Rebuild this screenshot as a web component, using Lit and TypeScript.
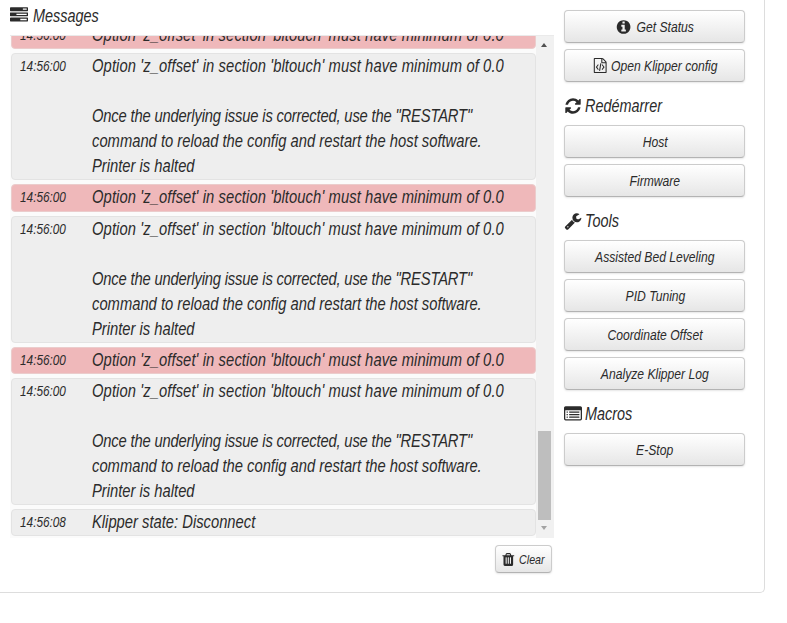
import { LitElement, html, css, svg } from "lit";
import { customElement } from "lit/decorators.js";

const ICONS: Record<string, string> = {
  tasks: "M1024 1408h640v-128h-640v128zm-384-512h1024v-128h-1024v128zm640-512h384v-128h-384v128zm512 832v256q0 26-19 45t-45 19h-1664q-26 0-45-19t-19-45v-256q0-26 19-45t45-19h1664q26 0 45 19t19 45zm0-512v256q0 26-19 45t-45 19h-1664q-26 0-45-19t-19-45v-256q0-26 19-45t45-19h1664q26 0 45 19t19 45zm0-512v256q0 26-19 45t-45 19h-1664q-26 0-45-19t-19-45v-256q0-26 19-45t45-19h1664q26 0 45 19t19 45z",
  info: "M1152 1376v-160q0-14-9-23t-23-9h-96v-512q0-14-9-23t-23-9h-320q-14 0-23 9t-9 23v160q0 14 9 23t23 9h96v320h-96q-14 0-23 9t-9 23v160q0 14 9 23t23 9h448q14 0 23-9t9-23zm-128-896v-160q0-14-9-23t-23-9h-192q-14 0-23 9t-9 23v160q0 14 9 23t23 9h192q14 0 23-9t9-23zm640 416q0 209-103 385.5t-279.5 279.5-385.5 103-385.5-103-279.5-279.5-103-385.5 103-385.5 279.5-279.5 385.5-103 385.5 103 279.5 279.5 103 385.5z",
  file: "M1596 380q28 28 48 76t20 88v1152q0 40-28 68t-68 28h-1344q-40 0-68-28t-28-68v-1600q0-40 28-68t68-28h896q40 0 88 20t76 48zm-444-244v376h376q-10-29-22-41l-313-313q-12-12-41-22zm384 1528v-1024h-416q-40 0-68-28t-28-68v-416h-768v1536h1280zm-928-896q8-11 21-12.5t24 6.5l51 38q11 8 12.5 21t-6.5 24l-182 243 182 243q8 11 6.5 24t-12.5 21l-51 38q-11 8-24 6.5t-21-12.5l-226-301q-14-19 0-38zm802 301q14 19 0 38l-226 301q-8 11-21 12.5t-24-6.5l-51-38q-11-8-12.5-21t6.5-24l182-243-182-243q-8-11-6.5-24t12.5-21l51-38q11-8 24-6.5t21 12.5zm-620 461q-13-2-20.5-13t-5.5-24l138-831q2-13 13-20.5t24-5.5l63 10q13 2 20.5 13t5.5 24l-138 831q-2 13-13 20.5t-24 5.5z",
  refresh: "M1639 1056q0 5-1 7-64 268-268 434.5t-478 166.5q-146 0-282.5-55t-243.5-157l-129 129q-19 19-45 19t-45-19-19-45v-448q0-26 19-45t45-19h448q26 0 45 19t19 45-19 45l-137 137q71 66 161 102t187 36q134 0 250-65t186-179q11-17 53-117 8-23 30-23h192q13 0 22.5 9.5t9.5 22.5zm25-800v448q0 26-19 45t-45 19h-448q-26 0-45-19t-19-45 19-45l138-138q-148-137-349-137-134 0-250 65t-186 179q-11 17-53 117-8 23-30 23h-199q-13 0-22.5-9.5t-9.5-22.5v-7q65-268 270-434.5t480-166.5q146 0 284 55.5t245 156.5l130-129q19-19 45-19t45 19 19 45z",
  wrench: "M448 1472q0-26-19-45t-45-19-45 19-19 45 19 45 45 19 45-19 19-45zm644-420l-682 682q-37 37-90 37-52 0-91-37l-106-108q-38-36-38-90 0-53 38-91l681-681q39 98 114.5 173.5t173.5 114.5zm634-435q0 39-23 106-47 134-164.5 217.5t-258.5 83.5q-185 0-316.5-131.5t-131.5-316.5 131.5-316.5 316.5-131.5q58 0 121.5 16.5t107.5 46.5q16 11 16 28t-16 28l-293 169v224l193 107q5-3 79-48.5t135.5-81 70.5-35.5q15 0 23.5 10t8.5 25z",
  list: "M384 1184v64q0 13-9.5 22.5t-22.5 9.5h-64q-13 0-22.5-9.5t-9.5-22.5v-64q0-13 9.5-22.5t22.5-9.5h64q13 0 22.5 9.5t9.5 22.5zm0-256v64q0 13-9.5 22.5t-22.5 9.5h-64q-13 0-22.5-9.5t-9.5-22.5v-64q0-13 9.5-22.5t22.5-9.5h64q13 0 22.5 9.5t9.5 22.5zm0-256v64q0 13-9.5 22.5t-22.5 9.5h-64q-13 0-22.5-9.5t-9.5-22.5v-64q0-13 9.5-22.5t22.5-9.5h64q13 0 22.5 9.5t9.5 22.5zm1152 512v64q0 13-9.5 22.5t-22.5 9.5h-960q-13 0-22.5-9.5t-9.5-22.5v-64q0-13 9.5-22.5t22.5-9.5h960q13 0 22.5 9.5t9.5 22.5zm0-256v64q0 13-9.5 22.5t-22.5 9.5h-960q-13 0-22.5-9.5t-9.5-22.5v-64q0-13 9.5-22.5t22.5-9.5h960q13 0 22.5 9.5t9.5 22.5zm0-256v64q0 13-9.5 22.5t-22.5 9.5h-960q-13 0-22.5-9.5t-9.5-22.5v-64q0-13 9.5-22.5t22.5-9.5h960q13 0 22.5 9.5t9.5 22.5zm128 704v-832q0-13-9.5-22.5t-22.5-9.5h-1472q-13 0-22.5 9.5t-9.5 22.5v832q0 13 9.5 22.5t22.5 9.5h1472q13 0 22.5-9.5t9.5-22.5zm128-1088v1088q0 66-47 113t-113 47h-1472q-66 0-113-47t-47-113v-1088q0-66 47-113t113-47h1472q66 0 113 47t47 113z",
  trash: "M704 1376v-704q0-14-9-23t-23-9h-64q-14 0-23 9t-9 23v704q0 14 9 23t23 9h64q14 0 23-9t9-23zm256 0v-704q0-14-9-23t-23-9h-64q-14 0-23 9t-9 23v704q0 14 9 23t23 9h64q14 0 23-9t9-23zm256 0v-704q0-14-9-23t-23-9h-64q-14 0-23 9t-9 23v704q0 14 9 23t23 9h64q14 0 23-9t9-23zm-544-992h448l-48-117q-7-9-17-11h-317q-10 2-17 11zm928 32v64q0 14-9 23t-23 9h-96v948q0 83-47 143.5t-113 60.5h-832q-66 0-113-58.5t-47-141.5v-952h-96q-14 0-23-9t-9-23v-64q0-14 9-23t23-9h309l70-167q15-37 54-63t79-26h320q40 0 79 26t54 63l70 167h309q14 0 23 9t9 23z",
};

const icon = (name: string) =>
  html`<svg class="ic ic-${name}" viewBox="0 0 1792 1792" preserveAspectRatio="none" aria-hidden="true">${svg`<path fill="currentColor" d=${ICONS[name]}></path>`}</svg>`;

const ERR = "Option 'z_offset' in section 'bltouch' must have minimum of 0.0";
const ONCE = 'Once the underlying issue is corrected, use the "RESTART"';
const LONG = [ERR, "", ONCE, "command to reload the config and restart the host software.", "Printer is halted"];

const ROWS: { t: string; lines: string[]; red?: boolean }[] = [
  { t: "14:56:00", lines: [ERR], red: true },
  { t: "14:56:00", lines: LONG },
  { t: "14:56:00", lines: [ERR], red: true },
  { t: "14:56:00", lines: LONG },
  { t: "14:56:00", lines: [ERR], red: true },
  { t: "14:56:00", lines: LONG },
  { t: "14:56:08", lines: ["Klipper state: Disconnect"] },
];

const lineClass = (l: string) => (l === ERR ? "line nar err" : l === ONCE ? "line nar once" : "line nar");

@customElement("app-root")
export class AppRoot extends LitElement {
  static styles = css`
    :host {
      display: block;
      width: 765px;
      font-family: "Liberation Sans", Arial, sans-serif;
      font-style: italic;
      color: #2b2b2b;
    }
    .card {
      display: flex;
      gap: 10px;
      box-sizing: border-box;
      height: 593px;
      padding: 0 19px 0 10px;
      background: #fff;
      border-right: 1px solid #ddd;
      border-bottom: 1px solid #ddd;
      border-bottom-right-radius: 5px;
    }
    .left { width: 544px; flex: none; display: flex; flex-direction: column; }
    .right { width: 181px; flex: none; display: flex; flex-direction: column; padding-top: 10px; }
    .title, .head {
      display: flex; align-items: center; box-sizing: border-box; font-size: 17.6px; line-height: 20px;
    }
    .title { height: 35px; padding-bottom: 4px; gap: 5px; }
    .title .ic { margin-top: -1px; }
    .head { height: 37px; padding-bottom: 2px; gap: 3px; }
    .nar { display: block; white-space: pre; transform: scaleX(0.82); transform-origin: 0 50%; }
    .err { letter-spacing: 0.116px; }
    .once { letter-spacing: -0.21px; }
    .ic { width: 18px; height: 18px; flex: none; }
    .box {
      display: flex; height: 502px; background: #f1f1f1;
      border-top: 1px solid #eaeaea; overflow: hidden;
    }
    .list {
      width: 526px; flex: none; display: flex; flex-direction: column; gap: 4px;
      margin-top: -14.5px; background: #fbfbfb; padding: 0 0 0 1px;
      box-sizing: border-box;
    }
    .row {
      display: flex; flex: none; border: 1px solid #e3e3e3; border-radius: 4px; background: #eee;
      font-size: 18px; line-height: 25px;
    }
    .row.red { background: #efb8ba; border-color: #ebcccc; height: 27.5px; box-sizing: border-box; }
    .time { width: 80px; flex: none; padding-left: 8px; font-size: 14.4px; box-sizing: border-box; }
    .text { flex: 1; min-width: 0; }
    .line { height: 25px; }
    .bar { width: 18px; flex: none; display: flex; flex-direction: column; align-items: flex-start; }
    .arrow { width: 0; height: 0; border: 3.5px solid transparent; margin-left: 5px; }
    .arrow.up { border-top: 0; border-bottom: 4px solid #505050; margin-top: 7px; }
    .arrow.down { border-bottom: 0; border-top: 4px solid #a3a3a3; margin-top: 6px; margin-bottom: 8px; }
    .thumb { width: 13px; height: 89px; margin-left: 2px; margin-top: auto; background: #bebebe; }
    .foot { display: flex; justify-content: flex-end; padding: 7px 2px 0 0; }
    .btn {
      display: flex; align-items: center; justify-content: center; box-sizing: border-box;
      width: 100%; height: 33px; flex: none; padding: 0 0 0 1px; margin: 0 0 6px;
      font: inherit; font-size: 14.8px; color: #2b2b2b;
      background: linear-gradient(to bottom, #fff, #e6e6e6);
      border: 1px solid #ccc; border-bottom-color: #b3b3b3; border-radius: 4px;
      box-shadow: 0 1px 2px rgba(0,0,0,.1);
    }
    .in { display: flex; align-items: center; gap: 6px; white-space: pre; transform: scaleX(0.82); }
    .in .ic { width: 19.5px; height: 16px; }
    .in .ic-file { width: 18.3px; height: 15px; margin-right: -2px; }
    .clear { width: 57px; height: 28px; margin: 0; padding: 0; font-size: 13px; }
    .clear .in { gap: 4px; margin-left: -2px; }
    .clear .in .ic { width: 18.3px; height: 15px; }
  `;

  private btn(label: string, ic?: string) {
    return html`<button class="btn"><span class="in">${ic ? icon(ic) : ""}<span>${label}</span></span></button>`;
  }

  render() {
    return html`<div class="card">
      <div class="left">
        <div class="title">${icon("tasks")}<span class="nar">Messages</span></div>
        <div class="box">
          <div class="list">
            ${ROWS.map(
              (r) => html`<div class="row ${r.red ? "red" : ""}">
                <div class="time"><span class="nar">${r.t}</span></div>
                <div class="text">${r.lines.map((l) => html`<div class=${lineClass(l)}>${l}</div>`)}</div>
              </div>`
            )}
          </div>
          <div class="bar">
            <div class="arrow up"></div>
            <div class="thumb"></div>
            <div class="arrow down"></div>
          </div>
        </div>
        <div class="foot"><button class="btn clear"><span class="in">${icon("trash")}<span>Clear</span></span></button></div>
      </div>
      <div class="right">
        ${this.btn("Get Status", "info")}
        ${this.btn("Open Klipper config", "file")}
        <div class="head">${icon("refresh")}<span class="nar">Redémarrer</span></div>
        ${this.btn("Host")}
        ${this.btn("Firmware")}
        <div class="head">${icon("wrench")}<span class="nar">Tools</span></div>
        ${this.btn("Assisted Bed Leveling")}
        ${this.btn("PID Tuning")}
        ${this.btn("Coordinate Offset")}
        ${this.btn("Analyze Klipper Log")}
        <div class="head">${icon("list")}<span class="nar">Macros</span></div>
        ${this.btn("E-Stop")}
      </div>
    </div>`;
  }
}
